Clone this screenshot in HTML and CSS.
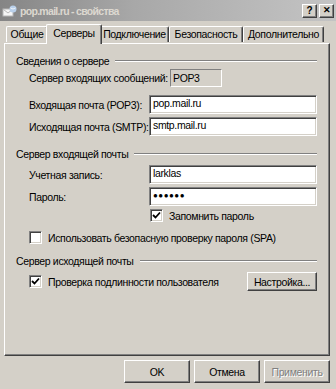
FILE: index.html
```html
<!DOCTYPE html>
<html lang="ru">
<head>
    <meta charset="utf-8">
    <title>pop.mail.ru - свойства</title>
    <link rel="stylesheet" href="styles.css">
</head>
<body>
    <div class="window">
        <div class="titlebar">
            <svg class="app-icon" width="16" height="16" viewBox="0 0 16 16">
                <rect x="1" y="6" width="10" height="7" fill="#f6f6f6" stroke="#b8b8b8"/>
                <path d="M1.5 6.5 L6 10 L10.5 6.5" fill="none" stroke="#b8b8b8"/>
                <circle cx="11" cy="6" r="3.5" fill="#b9d0ea"/>
                <path d="M8.5 5 Q11 7 13.5 5" fill="none" stroke="#eef4fb"/>
            </svg>
            <span class="title">pop.mail.ru - свойства</span>
            <div class="caption-buttons">
                <span class="cap-btn">?</span>
                <span class="cap-btn close">&#x2715;</span>
            </div>
        </div>

        <div class="content">
            <div class="tabs">
                <div class="tab first">Общие</div>
                <div class="tab selected">Серверы</div>
                <div class="tab">Подключение</div>
                <div class="tab">Безопасность</div>
                <div class="tab last">Дополнительно</div>
            </div>

            <div class="panel">
                <div class="group-head"><span>Сведения о сервере</span><i class="etch"></i></div>

                <div class="row row-type">
                    <span class="label-auto">Сервер входящих сообщений:</span>
                    <span class="static-field">POP3</span>
                </div>
                <div class="row row-in">
                    <span class="label">Входящая почта (POP3):</span>
                    <span class="field">pop.mail.ru</span>
                </div>
                <div class="row row-tight">
                    <span class="label">Исходящая почта (SMTP):</span>
                    <span class="field">smtp.mail.ru</span>
                </div>

                <div class="group-head group-next"><span>Сервер входящей почты</span><i class="etch"></i></div>

                <div class="row row-account">
                    <span class="label">Учетная запись:</span>
                    <span class="field">larklas</span>
                </div>
                <div class="row row-tight">
                    <span class="label">Пароль:</span>
                    <span class="field password">●●●●●●</span>
                </div>
                <div class="check-row remember">
                    <span class="checkbox checked">
                        <svg width="9" height="9" viewBox="0 0 9 9"><polyline points="1,4 3.5,6.5 8,1.5" fill="none" stroke="#000" stroke-width="1.8"/></svg>
                    </span>
                    <span>Запомнить пароль</span>
                </div>
                <div class="check-row spa">
                    <span class="checkbox"></span>
                    <span>Использовать безопасную проверку пароля (SPA)</span>
                </div>

                <div class="group-head group-last"><span>Сервер исходящей почты</span><i class="etch"></i></div>

                <div class="auth-row">
                    <div class="check-row">
                        <span class="checkbox checked">
                            <svg width="9" height="9" viewBox="0 0 9 9"><polyline points="1,4 3.5,6.5 8,1.5" fill="none" stroke="#000" stroke-width="1.8"/></svg>
                        </span>
                        <span>Проверка подлинности пользователя</span>
                    </div>
                    <button class="btn settings">Настройка...</button>
                </div>
            </div>

            <div class="actions">
                <button class="btn">OK</button>
                <button class="btn">Отмена</button>
                <button class="btn disabled">Применить</button>
            </div>
        </div>
    </div>
</body>
</html>
```

FILE: styles.css
```css
body {
    margin: 0;
    padding: 0;
    background-color: #d4d0c8;
    font-family: "Liberation Sans", Arial, sans-serif;
    font-size: 10.5px;
    letter-spacing: -0.35px;
    color: #000;
    white-space: nowrap;
}

.window {
    width: 336px;
    height: 389px;
    background-color: #d4d0c8;
    overflow: hidden;
}

/* title bar */
.titlebar {
    height: 21px;
    display: flex;
    align-items: center;
    padding: 0 2px 0 2px;
    background: linear-gradient(to right, #858585, #a8a8a8 40%, #c4c4c4);
}

.app-icon {
    margin-right: 2px;
}

.title {
    flex: 1;
    color: #dcd8d0;
    font-weight: bold;
    font-size: 10.5px;
    letter-spacing: -0.7px;
}

.caption-buttons {
    display: flex;
    gap: 2px;
}

.cap-btn {
    width: 13px;
    height: 12px;
    display: flex;
    align-items: center;
    justify-content: center;
    background-color: #d4d0c8;
    border-top: 1px solid #fff;
    border-left: 1px solid #fff;
    border-right: 1px solid #404040;
    border-bottom: 1px solid #404040;
    box-shadow: inset -1px -1px #808080;
    font-weight: bold;
    font-size: 10px;
    letter-spacing: 0;
    line-height: 1;
}

.cap-btn.close {
    font-size: 9px;
}

/* tabs */
.content {
    padding: 0 6px 0 4px;
}

.tabs {
    display: flex;
    align-items: flex-end;
    height: 22px;
    padding-left: 2px;
    position: relative;
    z-index: 1;
}

.tab {
    height: 16px;
    line-height: 15px;
    text-align: center;
    border-top: 1px solid #fff;
    border-left: 1px solid #fff;
    border-right: 1px solid #404040;
    box-shadow: inset -1px 0 #808080;
    border-radius: 2px 2px 0 0;
    box-sizing: border-box;
    margin-bottom: 1px;
}

.tab.first { width: 42px; }
.tab:nth-child(3) { width: 69px; }
.tab:nth-child(4) { width: 74px; }
.tab.last { width: 81px; }

.tab.selected {
    width: 56px;
    height: 20px;
    line-height: 16px;
    margin: 0 -2px -1px -2px;
    background-color: #d4d0c8;
    position: relative;
    z-index: 2;
}

.panel {
    height: 313px;
    box-sizing: border-box;
    border-top: 1px solid #fff;
    border-left: 1px solid #fff;
    border-right: 1px solid #404040;
    border-bottom: 1px solid #404040;
    box-shadow: inset -1px -1px #808080;
    padding: 10px 12px 0 11px;
}

.group-head {
    display: flex;
    align-items: center;
    height: 13px;
}

.etch {
    flex: 1;
    height: 0;
    margin-left: 6px;
    border-top: 1px solid #808080;
    border-bottom: 1px solid #fff;
}

.group-next {
    margin-top: 11px;
}

.group-last {
    margin-top: 10px;
}

.row {
    display: flex;
    align-items: center;
    padding-left: 13px;
}

.row-type {
    margin-top: 2px;
}

.row-in {
    margin-top: 8px;
}

.row-account {
    margin-top: 5px;
}

.row-tight {
    margin-top: 3px;
}

.label {
    width: 120px;
    flex-shrink: 0;
}

.label-auto {
    width: 141px;
}

.static-field {
    width: 52px;
    height: 18px;
    box-sizing: border-box;
    line-height: 16px;
    padding-left: 2px;
    border-top: 1px solid #808080;
    border-left: 1px solid #808080;
    border-right: 1px solid #fff;
    border-bottom: 1px solid #fff;
}

.field {
    flex: 1;
    height: 19px;
    box-sizing: border-box;
    line-height: 15px;
    padding-left: 3px;
    background-color: #fff;
    border-top: 1px solid #808080;
    border-left: 1px solid #808080;
    border-right: 1px solid #fff;
    border-bottom: 1px solid #fff;
    box-shadow: inset 1px 1px #404040, inset -1px -1px #d4d0c8;
}

.field.password {
    font-size: 8px;
    letter-spacing: 0.5px;
}

/* checkboxes */
.check-row {
    display: flex;
    align-items: center;
    gap: 6px;
    height: 13px;
}

.checkbox {
    width: 13px;
    height: 13px;
    box-sizing: border-box;
    display: flex;
    align-items: center;
    justify-content: center;
    background-color: #fff;
    border-top: 1px solid #808080;
    border-left: 1px solid #808080;
    border-right: 1px solid #fff;
    border-bottom: 1px solid #fff;
    box-shadow: inset 1px 1px #404040, inset -1px -1px #d4d0c8;
}

.remember {
    margin-top: 3px;
    padding-left: 134px;
}

.spa {
    margin-top: 9px;
    padding-left: 13px;
}

.auth-row {
    display: flex;
    align-items: center;
    justify-content: space-between;
    margin-top: 5px;
    padding-left: 13px;
}

/* buttons */
.btn {
    height: 23px;
    box-sizing: border-box;
    padding: 0;
    font-family: inherit;
    font-size: 10.5px;
    letter-spacing: -0.35px;
    color: #000;
    background-color: #d4d0c8;
    border-top: 1px solid #fff;
    border-left: 1px solid #fff;
    border-right: 1px solid #404040;
    border-bottom: 1px solid #404040;
    box-shadow: inset -1px -1px #808080;
}

.btn.settings {
    width: 70px;
    height: 19px;
}

.actions {
    display: flex;
    justify-content: flex-end;
    gap: 4px;
    margin-top: 4px;
}

.actions .btn {
    width: 66px;
}

.btn.disabled {
    color: #808080;
    text-shadow: 1px 1px #fff;
}
```
